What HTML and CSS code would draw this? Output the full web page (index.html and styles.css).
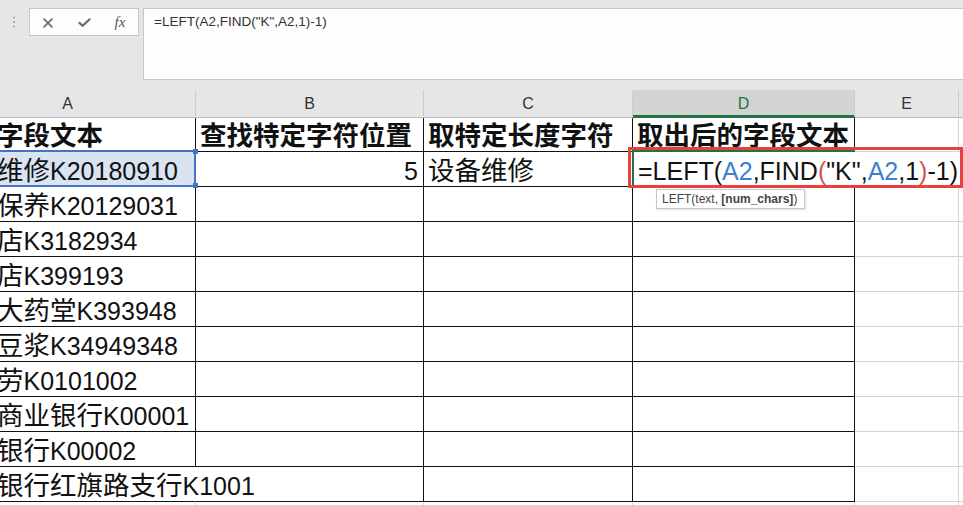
FILE: index.html
```html
<!DOCTYPE html>
<html lang="zh-CN">
<head>
<meta charset="utf-8">
<title>LEFT FIND</title>
<link rel="stylesheet" href="styles.css">
</head>
<body>
<div class="fbar">
  <svg class="grip" width="29" height="27" viewBox="0 0 29 27"><circle cx="14" cy="9.5" r="1.1"/><circle cx="14" cy="14" r="1.1"/><circle cx="14" cy="18.5" r="1.1"/></svg>
  <div class="btns">
    <div class="btn"><svg width="10" height="10" viewBox="0 0 10 10"><path d="M0.6 0.6L9.4 9.4M9.4 0.6L0.6 9.4" stroke="#666" stroke-width="1.5" fill="none"/></svg></div>
    <div class="btn"><svg width="13" height="9" viewBox="0 0 13 9"><path d="M0.8 4.2L4.6 7.8L12.2 0.8" stroke="#6a6a6a" stroke-width="2.2" fill="none"/></svg></div>
    <div class="btn"><span class="fx">fx</span></div>
  </div>
  <div class="finput">=LEFT(A2,FIND("K",A2,1)-1)</div>
</div>

<div class="sheet">
  <div class="hd">A</div><div class="hd">B</div><div class="hd">C</div><div class="hd on">D</div><div class="hd">E</div><div class="hd"></div>

  <div class="cell top tb"><span class="zh b">原始字段文本</span></div>
  <div class="cell top tb"><span class="zh b">查找特定字符位置</span></div>
  <div class="cell top tb"><span class="zh b">取特定长度字符</span></div>
  <div class="cell top tb"><span class="zh b">取出后的字段文本</span></div>
  <div class="cell top"></div><div class="cell top"></div>

  <div class="cell tb sel"><span class="zh">设备维修</span>K20180910</div>
  <div class="cell tb num">5</div>
  <div class="cell tb"><span class="zh">设备维修</span></div>
  <div class="cell tb"></div><div class="cell"></div><div class="cell"></div>

  <div class="cell tb"><span class="zh">设备保养</span>K20129031</div>
  <div class="cell tb"></div><div class="cell tb"></div><div class="cell tb"></div><div class="cell"></div><div class="cell"></div>

  <div class="cell tb"><span class="zh">便利店</span>K3182934</div>
  <div class="cell tb"></div><div class="cell tb"></div><div class="cell tb"></div><div class="cell"></div><div class="cell"></div>

  <div class="cell tb"><span class="zh">水果店</span>K399193</div>
  <div class="cell tb"></div><div class="cell tb"></div><div class="cell tb"></div><div class="cell"></div><div class="cell"></div>

  <div class="cell tb"><span class="zh">百姓大药堂</span>K393948</div>
  <div class="cell tb"></div><div class="cell tb"></div><div class="cell tb"></div><div class="cell"></div><div class="cell"></div>

  <div class="cell tb"><span class="zh">永和豆浆</span>K34949348</div>
  <div class="cell tb"></div><div class="cell tb"></div><div class="cell tb"></div><div class="cell"></div><div class="cell"></div>

  <div class="cell tb"><span class="zh">麦当劳</span>K0101002</div>
  <div class="cell tb"></div><div class="cell tb"></div><div class="cell tb"></div><div class="cell"></div><div class="cell"></div>

  <div class="cell tb"><span class="zh">农村商业银行</span>K00001</div>
  <div class="cell tb"></div><div class="cell tb"></div><div class="cell tb"></div><div class="cell"></div><div class="cell"></div>

  <div class="cell tb"><span class="zh">建设银行</span>K00002</div>
  <div class="cell tb"></div><div class="cell tb"></div><div class="cell tb"></div><div class="cell"></div><div class="cell"></div>

  <div class="cell tb ov"><span class="zh">中国银行红旗路支行</span>K1001</div>
  <div class="cell tb"></div><div class="cell tb"></div><div class="cell tb"></div><div class="cell"></div><div class="cell"></div>

  <div class="cell"></div><div class="cell"></div><div class="cell"></div><div class="cell"></div><div class="cell"></div><div class="cell"></div>

  <div class="refbox"></div>
  <div class="handle h1"></div>
  <div class="handle h2"></div>
  <div class="active"></div>
  <div class="editor">=LEFT(<span class="ref">A2</span>,FIND<span class="par">(</span>"K",<span class="ref">A2</span>,1<span class="par">)</span>-1)</div>
  <div class="redbox"></div>
  <div class="tip">LEFT(text, <b>[num_chars]</b>)</div>
</div>
</body>
</html>
```

FILE: styles.css
```css
* { box-sizing: border-box; }
html, body { margin: 0; }
body {
  width: 963px;
  height: 505px;
  overflow: hidden;
  background: #fff;
  font-family: "Liberation Sans", "Noto Sans CJK SC", sans-serif;
}

/* formula bar */
.fbar {
  display: flex;
  align-items: flex-start;
  height: 90px;
  padding-top: 8px;
  background: #e6e6e6;
}
.grip { flex: none; fill: #a6a6a6; }
.btns {
  flex: none;
  display: flex;
  width: 110px;
  height: 28px;
  border: 1px solid #c6c6c6;
  background: #fdfdfd;
}
.btn {
  width: 36px;
  display: flex;
  align-items: center;
  justify-content: center;
  padding-top: 1px;
}
.fx {
  font-family: "Liberation Serif", serif;
  font-style: italic;
  font-size: 15px;
  color: #555;
}
.finput {
  flex: 1;
  margin-left: 4px;
  height: 72px;
  border: 1px solid #c6c6c6;
  border-right: none;
  background: #fdfdfd;
  padding: 4px 10px;
  font-size: 13.5px;
  line-height: 18px;
  color: #333;
  white-space: nowrap;
}

/* sheet */
.sheet {
  position: relative;
  margin-left: -60px;
  display: grid;
  grid-template-columns: 256px 228px 209px 222px 104px 200px;
  grid-template-rows: 28px 34px repeat(11, 35px);
}
.hd {
  background: #e6e6e6;
  border-right: 1px solid #cdcdcd;
  border-bottom: 1px solid #bcbcbc;
  text-align: center;
  font-size: 16px;
  line-height: 27px;
  color: #333;
}
.hd.on {
  background: #d3d3d3;
  color: #217346;
  border-bottom: 3px solid #217346;
}
.cell {
  border-right: 1px solid #d4d4d4;
  border-bottom: 1px solid #d4d4d4;
  font-size: 25px;
  line-height: 29px;
  padding: 5px 5px 0 4px;
  white-space: nowrap;
  color: #111;
}
.cell.top { padding-top: 4px; }
.tb { border-right-color: #111; border-bottom-color: #111; }
.ov { border-right-color: transparent; }
.sel { background: #dae3f1; }
.num { text-align: right; }
.zh { font-size: 26.5px; line-height: 20px; }
.b { font-weight: 700; }

/* overlays */
.refbox {
  position: absolute;
  left: -4px;
  top: 60px;
  width: 260px;
  height: 37px;
  border: 2px solid #4472c4;
}
.handle {
  position: absolute;
  left: 253px;
  width: 5px;
  height: 5px;
  background: #4472c4;
}
.h1 { top: 59px; }
.h2 { top: 93px; }
.active {
  position: absolute;
  left: 692px;
  top: 60px;
  width: 223px;
  height: 37px;
  border: 2px solid #217346;
}
.editor {
  position: absolute;
  left: 694px;
  top: 62px;
  width: 325px;
  height: 34px;
  background: #fff;
  padding: 5px 0 0 4px;
  font-size: 25px;
  line-height: 29px;
  white-space: nowrap;
  color: #111;
}
.ref { color: #3f7fd2; }
.par { color: #d4524d; }
.redbox {
  position: absolute;
  left: 688px;
  top: 57px;
  width: 335px;
  height: 41px;
  border: 3px solid #e8403d;
}
.tip {
  position: absolute;
  left: 716px;
  top: 99px;
  height: 20px;
  border: 1px solid #c6c6c6;
  background: #fff;
  padding: 0 7px 0 5px;
  font-size: 12px;
  line-height: 18px;
  color: #444;
  white-space: nowrap;
  box-shadow: 1px 1px 2px rgba(0, 0, 0, 0.12);
}
```
